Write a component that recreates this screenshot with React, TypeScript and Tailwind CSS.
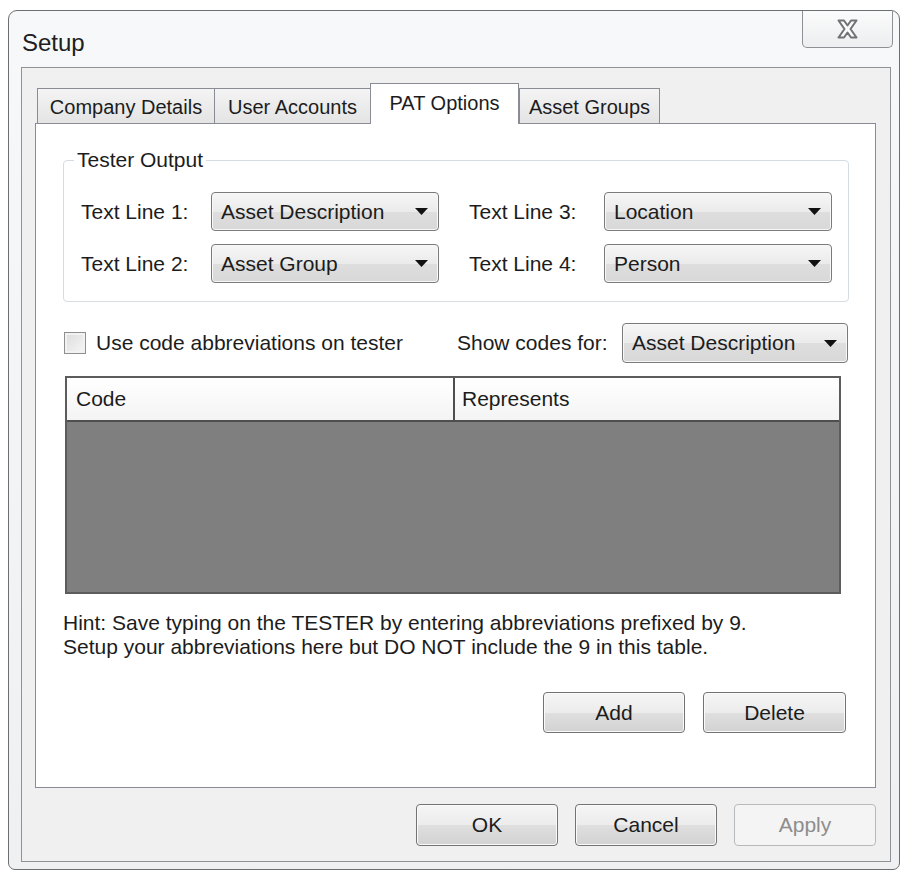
import React from 'react'

function Caret() {
  return (
    <svg width="13" height="7" viewBox="0 0 13 7" className="shrink-0">
      <path d="M0 0h13L6.5 7z" fill="#111" />
    </svg>
  )
}

function Combo({ value, className }: { value: string; className: string }) {
  return (
    <div
      className={`flex items-center justify-between rounded-[4px] border border-[#7a7a7a] bg-[linear-gradient(#f6f6f6,#ebebeb_50%,#dedede_51%,#d8d8d8)] pl-[9px] pr-[10px] shadow-[inset_0_0_0_1px_#f8f8f8] ${className}`}
    >
      <span>{value}</span>
      <Caret />
    </div>
  )
}

function Button({ label, className, disabled }: { label: string; className: string; disabled?: boolean }) {
  return (
    <div
      className={
        disabled
          ? `flex items-center justify-center rounded-[4px] border border-[#b7babc] bg-[#f4f4f4] text-[#8d8d8d] ${className}`
          : `flex items-center justify-center rounded-[4px] border border-[#737373] bg-[linear-gradient(#f5f5f5,#ececec_50%,#dfdfdf_51%,#d2d2d2)] shadow-[inset_0_0_0_1px_#fafafa] ${className}`
      }
    >
      {label}
    </div>
  )
}

const tabs = [
  { label: 'Company Details', w: 'w-[178px]' },
  { label: 'User Accounts', w: 'w-[157px]' },
  { label: 'PAT Options', w: 'w-[149px]', active: true },
  { label: 'Asset Groups', w: 'w-[141px]' },
]

export default function App() {
  return (
    <div className="min-h-screen bg-white pl-[8px] pt-[10px] text-[21px] leading-[24px] text-[#1c1c1c] [font-family:'Liberation_Sans',Arial,sans-serif]">
      <div className="flex h-[860px] w-[892px] flex-col rounded-t-[9px] rounded-b-[7px] border border-[#6b6e72] bg-[linear-gradient(#f7f8f9,#eef0f2)]">
        {/* title bar */}
        <div className="flex h-[56px] items-start justify-between pl-[13px] pr-[6px]">
          <span className="mt-[18px] text-[24px] leading-[28px] text-[#202020]">Setup</span>
          <div className="flex h-[37px] w-[91px] items-center justify-center rounded-b-[5px] border border-t-0 border-[#8d9196] bg-[linear-gradient(#fbfbfb,#eceeef)]">
            <svg width="23" height="20" viewBox="0 0 23 20">
              <path
                d="M2.5 1.5h5.5l3.5 5 3.5-5h5.5l-6 8.5 6 8.5h-5.5l-3.5-5-3.5 5h-5.5l6-8.5z"
                fill="#fbfbfb"
                stroke="#707275"
                strokeWidth="2"
                strokeLinejoin="round"
              />
            </svg>
          </div>
        </div>

        {/* client area */}
        <div className="ml-[12px] flex h-[795px] w-[870px] flex-col border border-[#8f9296] bg-[#f0f0f0]">
          <div className="ml-[13px] mt-[15px] w-[841px]">
            {/* tabs */}
            <div className="flex h-[40px] items-end pl-[2px] text-[20px]">
              {tabs.map((t) =>
                t.active ? (
                  <div
                    key={t.label}
                    className={`relative z-10 -mb-px flex h-[41px] items-center justify-center border border-b-0 border-[#898c95] bg-white pb-[2px] ${t.w}`}
                  >
                    {t.label}
                  </div>
                ) : (
                  <div
                    key={t.label}
                    className={`-mr-px flex h-[35px] items-center justify-center border border-b-0 border-[#898c95] bg-[linear-gradient(#f4f4f4,#e4e4e4)] pt-[1px] ${t.w}`}
                  >
                    {t.label}
                  </div>
                ),
              )}
            </div>

            {/* tab panel */}
            <div className="flex h-[665px] flex-col border border-[#898c95] bg-white">
              <fieldset className="ml-[27px] mt-[24px] w-[786px] rounded-[4px] border border-[#d5dde2] p-0">
                <legend className="ml-[10px] px-[3px]">Tester Output</legend>
                <div className="flex flex-col gap-[13px] pb-[18px] pl-[17px] pt-[20px]">
                  <div className="flex items-center">
                    <span className="w-[130px]">Text Line 1:</span>
                    <Combo value="Asset Description" className="h-[39px] w-[228px]" />
                    <span className="ml-[30px] w-[135px]">Text Line 3:</span>
                    <Combo value="Location" className="h-[39px] w-[228px]" />
                  </div>
                  <div className="flex items-center">
                    <span className="w-[130px]">Text Line 2:</span>
                    <Combo value="Asset Group" className="h-[39px] w-[228px]" />
                    <span className="ml-[30px] w-[135px]">Text Line 4:</span>
                    <Combo value="Person" className="h-[39px] w-[228px]" />
                  </div>
                </div>
              </fieldset>

              <div className="ml-[28px] mt-[21px] flex h-[40px] items-center">
                <div className="h-[22px] w-[22px] border border-[#8e8f8f] bg-[linear-gradient(135deg,#dcdcdc,#f6f6f6)] shadow-[inset_0_0_0_2px_#f2f2f2]" />
                <span className="ml-[10px] w-[361px]">Use code abbreviations on tester</span>
                <span className="w-[165px]">Show codes for:</span>
                <Combo value="Asset Description" className="h-[40px] w-[226px]" />
              </div>

              <div className="ml-[29px] mt-[13px] flex h-[218px] w-[776px] flex-col border-2 border-[#5c5c5c] bg-[#7f7f7f]">
                <div className="flex h-[44px] border-b-2 border-[#4e4e4e] bg-[linear-gradient(#ffffff,#f4f4f4)]">
                  <div className="flex w-[388px] items-center border-r-2 border-[#4e4e4e] pl-[9px]">Code</div>
                  <div className="flex flex-1 items-center pl-[7px]">Represents</div>
                </div>
              </div>

              <div className="ml-[27px] mt-[17px]">
                <p>Hint: Save typing on the TESTER by entering abbreviations prefixed by 9.</p>
                <p>Setup your abbreviations here but DO NOT include the 9 in this table.</p>
              </div>

              <div className="mr-[29px] mt-[33px] flex justify-end gap-[18px]">
                <Button label="Add" className="h-[41px] w-[142px]" />
                <Button label="Delete" className="h-[41px] w-[143px]" />
              </div>
            </div>
          </div>

          {/* dialog buttons */}
          <div className="mr-[14px] mt-[16px] flex justify-end gap-[17px]">
            <Button label="OK" className="h-[42px] w-[142px]" />
            <Button label="Cancel" className="h-[42px] w-[142px]" />
            <Button label="Apply" className="h-[42px] w-[142px]" disabled />
          </div>
        </div>
      </div>
    </div>
  )
}
